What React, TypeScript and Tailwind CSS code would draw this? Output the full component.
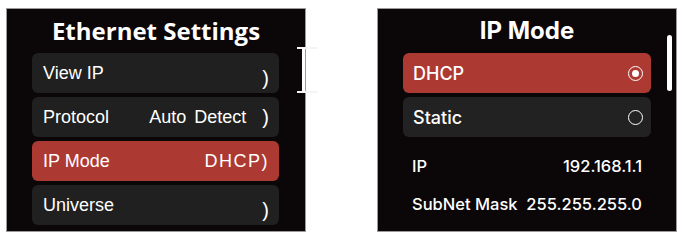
import React from "react";

const leftFont = { fontFamily: '"Liberation Sans", Arial, sans-serif' };
const titleFont = { fontFamily: '"Open Sans", "DejaVu Sans", sans-serif' };
const rightFont = { fontFamily: 'Inter, "Noto Sans", sans-serif' };

function MenuRow({
    label,
    value,
    active,
    drop,
}: {
    label: string;
    value?: string;
    active?: boolean;
    drop?: boolean;
}) {
    return (
        <div
            className={`flex h-[40px] items-center justify-between rounded-[6px] pl-[11px] pr-[10px] text-[18px] text-white ${
                active ? "bg-[#ad3a32]" : "bg-[#202020]"
            }`}
        >
            <span>{label}</span>
            {active ? (
                <span className="tracking-[1.5px]">{value})</span>
            ) : (
                <span className="flex items-center">
                    {value && <span className="mr-[16px] [word-spacing:3px]">{value}</span>}
                    <span className={`text-[20px] font-light ${drop ? "translate-y-[5px]" : ""}`}>)</span>
                </span>
            )}
        </div>
    );
}

function OptionRow({ label, selected }: { label: string; selected?: boolean }) {
    return (
        <div
            className={`flex h-[40px] items-center justify-between rounded-[6px] pl-[10px] pr-[8px] text-[18px] font-medium text-white ${
                selected ? "bg-[#ad3a32]" : "bg-[#222222]"
            }`}
        >
            <span>{label}</span>
            <span className="flex h-[15px] w-[15px] items-center justify-center rounded-full border-[1.5px] border-white">
                {selected && <span className="h-[7px] w-[7px] rounded-full bg-white" />}
            </span>
        </div>
    );
}

function InfoRow({ label, value }: { label: string; value: string }) {
    return (
        <div className="flex h-[38px] items-center justify-between px-[9px] text-[16.5px] font-medium text-white">
            <span>{label}</span>
            <span>{value}</span>
        </div>
    );
}

export default function App() {
    return (
        <div className="flex h-[245px] w-[688px] gap-[71px] bg-white pl-[6px] pt-[8px]">
            <div className="relative h-[224px] w-[300px] border border-[#9a9a9a] bg-[#0b0607]" style={leftFont}>
                <div
                    className="h-[44px] text-center text-[24px] font-bold leading-[44px] text-white"
                    style={titleFont}
                >
                    Ethernet Settings
                </div>
                <div className="flex flex-col gap-[4px] pl-[25px] pr-[26px]">
                    <MenuRow label="View IP" drop />
                    <MenuRow label="Protocol" value="Auto Detect" />
                    <MenuRow label="IP Mode" value="DHCP" active />
                    <MenuRow label="Universe" drop />
                </div>
                <svg
                    className="absolute left-[290px] top-[38px]"
                    width="21"
                    height="46"
                    viewBox="0 0 21 46"
                >
                    <path d="M0 1 H20 M0 45 H20" stroke="#f4f4f4" strokeWidth="2" />
                    <path d="M6.5 1 V45" stroke="#ffffff" strokeWidth="3" />
                </svg>
            </div>

            <div className="relative h-[224px] w-[300px] border border-[#9a9a9a] bg-[#0b0607]" style={rightFont}>
                <div className="h-[44px] text-center text-[24px] font-bold leading-[44px] text-white">IP Mode</div>
                <div className="flex flex-col gap-[4px] pl-[25px] pr-[25px]">
                    <OptionRow label="DHCP" selected />
                    <OptionRow label="Static" />
                    <div className="mt-[6px]">
                        <InfoRow label="IP" value="192.168.1.1" />
                        <InfoRow label="SubNet Mask" value="255.255.255.0" />
                    </div>
                </div>
                <div className="absolute right-[4px] top-[26px] h-[56px] w-[5px] rounded-full bg-white" />
            </div>
        </div>
    );
}
